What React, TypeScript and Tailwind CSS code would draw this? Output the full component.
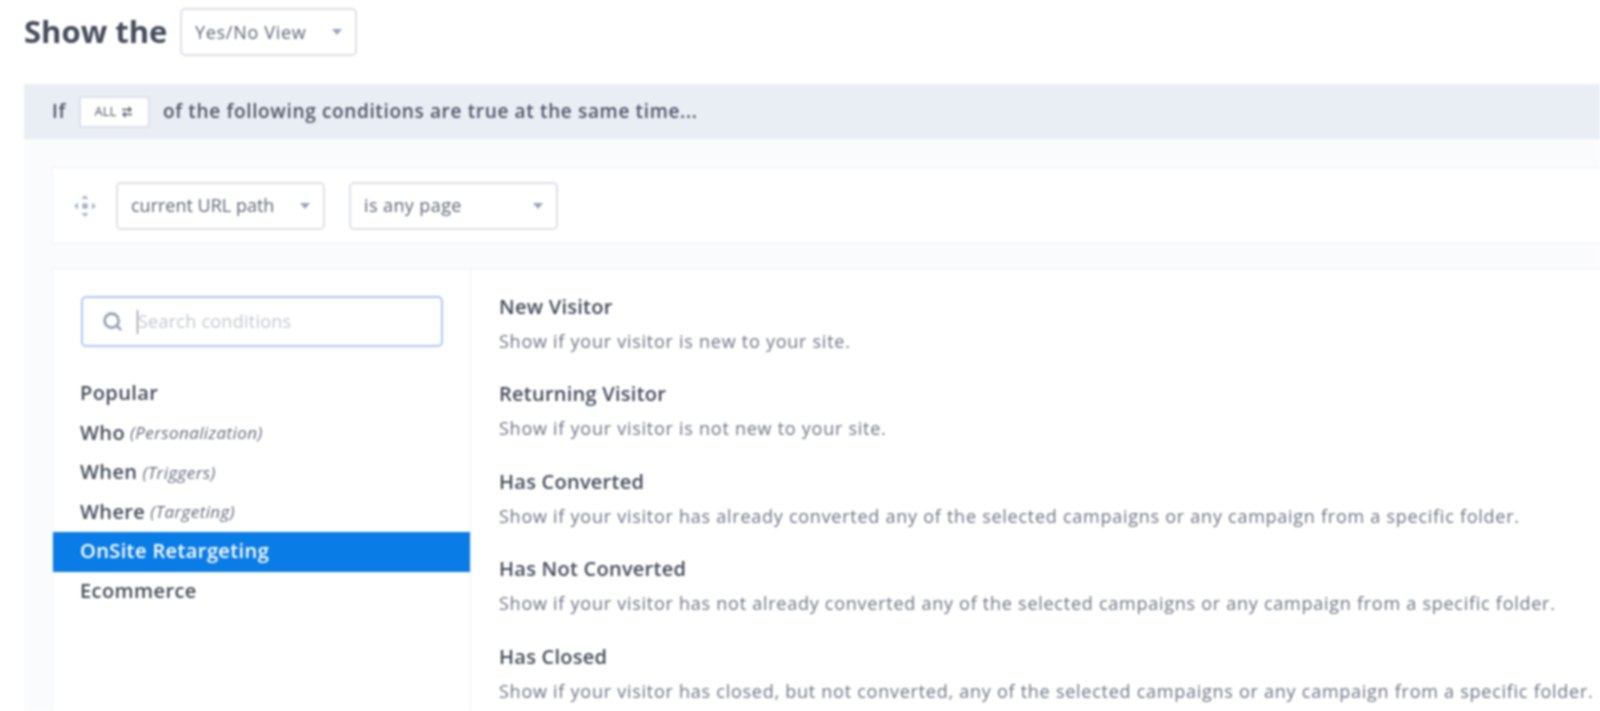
import { Search } from "lucide-react";

const font = "font-['Open_Sans',sans-serif]";

const conditions = [
  { title: "New Visitor", text: "Show if your visitor is new to your site." },
  { title: "Returning Visitor", text: "Show if your visitor is not new to your site." },
  { title: "Has Converted", text: "Show if your visitor has already converted any of the selected campaigns or any campaign from a specific folder." },
  { title: "Has Not Converted", text: "Show if your visitor has not already converted any of the selected campaigns or any campaign from a specific folder." },
  { title: "Has Closed", text: "Show if your visitor has closed, but not converted, any of the selected campaigns or any campaign from a specific folder." },
];

const categories = [
  { name: "Popular" },
  { name: "Who", note: "(Personalization)" },
  { name: "When", note: "(Triggers)" },
  { name: "Where", note: "(Targeting)" },
  { name: "OnSite Retargeting", active: true },
  { name: "Ecommerce" },
];

const Caret = () => (
  <span className="h-0 w-0 border-x-[5px] border-t-[6px] border-x-transparent border-t-[#98a3ba]" />
);

const Select = ({ label, className }: { label: string; className: string }) => (
  <div className={`flex items-center justify-between rounded-[5px] border-2 border-[#dde1ea] bg-white pl-[13px] pr-[13px] text-[#5f6777] ${className}`}>
    <span>{label}</span>
    <Caret />
  </div>
);

const DragIcon = () => (
  <svg width="24" height="26" viewBox="0 0 24 26" fill="#a9b3c9">
    <circle cx="12" cy="13" r="3" />
    <path d="M12 2l3.5 4h-7zM12 24l-3.5-4h7zM1 13l4-3.5v7zM23 13l-4 3.5v-7z" />
  </svg>
);

const SwapIcon = () => (
  <svg width="14" height="14" viewBox="0 0 14 14" fill="none" stroke="#5a6270" strokeWidth="1.4">
    <path d="M2 4.5h9M8.5 2l2.5 2.5L8.5 7M12 9.5H3M5.5 7L3 9.5 5.5 12" />
  </svg>
);

export default function App() {
  return (
    <div className={`h-[711px] w-[1600px] overflow-hidden bg-white pl-6 blur-[0.8px] ${font}`}>
      <div className="flex h-[84px] items-start pt-2">
        <h1 className="flex h-[46px] w-[156px] items-center text-[31px] font-bold whitespace-nowrap text-[#454c5b]">Show the</h1>
        <Select label="Yes/No View" className="h-12 w-[177px] text-[18px] tracking-[0.7px]" />
      </div>

      <div className="flex h-[55px] items-center bg-[#e9edf4] pl-7 text-[19px] font-semibold tracking-[0.65px] text-[#4f5665]">
        <span>If</span>
        <div className="ml-[13px] flex h-8 w-[71px] items-center justify-center gap-1 rounded border-2 border-[#dde1ea] bg-white text-[13px] font-normal tracking-normal">
          ALL <SwapIcon />
        </div>
        <span className="ml-[13px]">of the following conditions are true at the same time...</span>
      </div>

      <div className="h-full bg-[#fafbfc] pl-7 pt-7">
        <div className="flex h-[77px] items-center border border-r-0 border-[#eff1f5] bg-white pl-5">
          <DragIcon />
          <Select label="current URL path" className="ml-[19px] h-12 w-[209px] text-[18px]" />
          <Select label="is any page" className="ml-6 h-12 w-[209px] text-[18px] tracking-[0.4px]" />
        </div>

        <div className="mt-[24px] flex h-[500px] border border-r-0 border-[#eff1f5] bg-white">
          <div className="w-[418px] shrink-0 border-r border-[#eff1f5] pt-[27px]">
            <div className="ml-7 flex h-[51px] w-[362px] items-center rounded-[5px] border-2 border-[#adc8f6] pl-[19px] text-[18px] tracking-[0.25px] text-[#c3c8d2]">
              <Search size={21} strokeWidth={3} className="text-[#929cb0]" />
              <span className="ml-[14px] h-6 w-px bg-[#6b7280]" />
              <span>Search conditions</span>
            </div>
            <ul className="mt-[27px] text-[20px] font-semibold tracking-[0.4px] text-[#454c5b]">
              {categories.map(c => (
                <li
                  key={c.name}
                  className={`flex h-[39.5px] items-center gap-[5px] pb-px pl-[27px] ${c.active ? "bg-[#0a7ce6] text-white" : ""}`}
                >
                  {c.name}
                  {c.note && <i className="text-[17px] font-normal text-[#646b7b]">{c.note}</i>}
                </li>
              ))}
            </ul>
          </div>

          <div className="flex-1 pl-7 pt-[25px]">
            {conditions.map(c => (
              <div key={c.title} className="h-[87.4px]">
                <h3 className="text-[20px] leading-[26px] font-semibold tracking-[0.25px] text-[#454c5b]">{c.title}</h3>
                <p className="mt-[8px] text-[18px] leading-[26px] tracking-[0.74px] whitespace-nowrap text-[#6e7584]">{c.text}</p>
              </div>
            ))}
          </div>
        </div>
      </div>
    </div>
  );
}
